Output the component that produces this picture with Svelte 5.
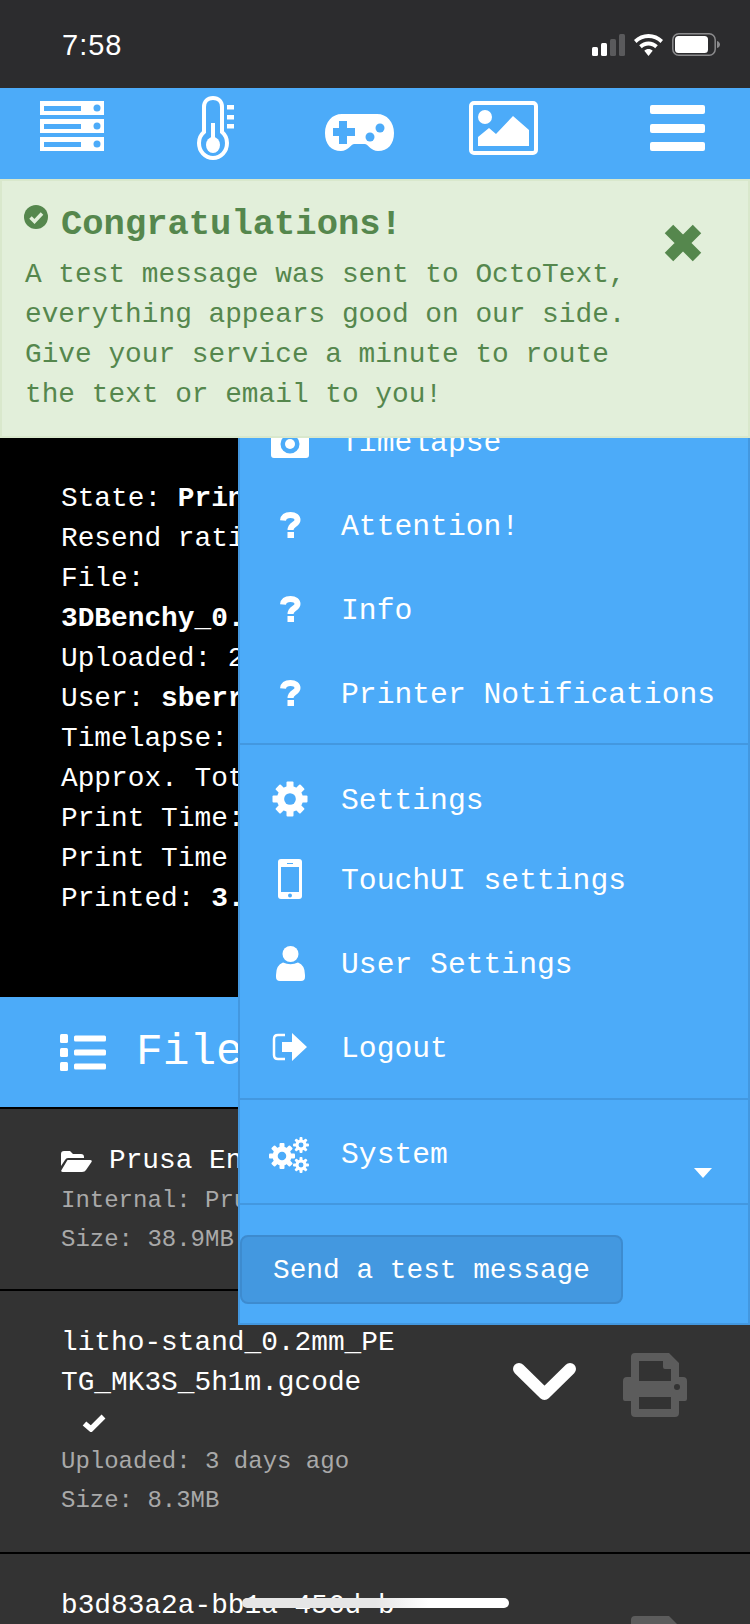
<script>
  const stats = [
    ['State: ', 'Prin'], ['Resend rati', ''], ['File:', ''], ['', '3DBenchy_0.'],
    ['Uploaded: 2', ''], ['User: ', 'sberr'], ['Timelapse:', ''],
    ['Approx. Tot', ''], ['Print Time:', ''], ['Print Time', ''], ['Printed: ', '3.']
  ];
  const teeth = [0, 45, 90, 135];
</script>

{#snippet gear(cx, cy, r, tw, tl)}
  {#each teeth as a}
    <rect x={cx - tw / 2} y={cy - tl} width={tw} height={tl * 2} rx="1" transform="rotate({a} {cx} {cy})" fill="#fff" />
  {/each}
  <circle {cx} {cy} r={r} fill="#fff" />
  <circle {cx} {cy} r={r * 0.45} fill="#4cabf9" />
{/snippet}

{#snippet question()}
  <svg width="21" height="26" viewBox="0 0 21 26">
    <path d="M3 8.500C3.500 4.500 6.500 3 10.500 3C15 3 17.500 5 17.500 8C17.500 12.500 10.500 12 10.500 18" fill="none" stroke="#fff" stroke-width="6" />
    <rect x="7.500" y="20" width="6.500" height="6" fill="#fff" />
  </svg>
{/snippet}

{#snippet printer()}
  <svg class="printer" width="64" height="64" viewBox="0 0 64 64">
    <path fill="#5c5c5c" fill-rule="evenodd" d="M12 0H46L56 10V24H60Q64 24 64 28V46Q64 48 62 48H56V60Q56 64 52 64H12Q8 64 8 60V48H2Q0 48 0 46V28Q0 24 4 24H8V4Q8 0 12 0ZM16 8V28H48V16H42Q40 16 40 14V8ZM16 44V56H48V44Z" />
    <circle cx="54" cy="34" r="3" fill="#333" />
  </svg>
{/snippet}

<div class="screen">
  <div class="status">
    <span class="time">7:58</span>
    <div class="status-icons">
      <svg width="33" height="22" viewBox="0 0 33 22">
        <rect x="0" y="13" width="6" height="9" rx="1.500" fill="#fff" />
        <rect x="9" y="9" width="6" height="13" rx="1.500" fill="#fff" />
        <rect x="18" y="5" width="6" height="17" rx="1.500" fill="#5a5a5c" />
        <rect x="27" y="0" width="6" height="22" rx="1.500" fill="#5a5a5c" />
      </svg>
      <svg width="29" height="22" viewBox="0 0 29 22">
        <path d="M14.500 0C20 0 25 2.200 29 6L26.500 9C23.300 5.800 19 4 14.500 4S5.700 5.800 2.500 9L0 6C4 2.200 9 0 14.500 0Z" fill="#fff" />
        <path d="M14.500 7.500C18 7.500 21.300 8.900 23.800 11.300L21.200 14.200C19.400 12.500 17 11.500 14.500 11.500S9.600 12.500 7.800 14.200L5.200 11.300C7.700 8.900 11 7.500 14.500 7.500Z" fill="#fff" />
        <path d="M14.500 15C16.100 15 17.600 15.600 18.700 16.700L14.500 22L10.300 16.700C11.400 15.600 12.900 15 14.500 15Z" fill="#fff" />
      </svg>
      <svg width="48" height="23" viewBox="0 0 48 23">
        <rect x="0.800" y="0.800" width="42.400" height="21.400" rx="6" fill="none" stroke="#8b8b8d" stroke-width="1.500" />
        <rect x="3" y="3" width="33" height="17" rx="3.500" fill="#fff" />
        <path d="M45 8C47 8.500 48 10 48 11.500S47 14.500 45 15Z" fill="#8b8b8d" />
      </svg>
    </div>
  </div>

  <nav class="nav">
    <svg class="server" width="64" height="50" viewBox="0 0 64 50">
      <rect x="0" y="0" width="64" height="14" fill="#fff" />
      <rect x="4" y="5" width="37" height="5" fill="#4cabf9" />
      <ellipse cx="57" cy="7" rx="3.500" ry="3.500" fill="#4cabf9" />
      <rect x="0" y="18" width="64" height="14" fill="#fff" />
      <rect x="4" y="23" width="37" height="5" fill="#4cabf9" />
      <ellipse cx="57" cy="25" rx="3.500" ry="3.500" fill="#4cabf9" />
      <rect x="0" y="36" width="64" height="14" fill="#fff" />
      <rect x="4" y="41" width="37" height="5" fill="#4cabf9" />
      <ellipse cx="57" cy="43" rx="3.500" ry="3.500" fill="#4cabf9" />
    </svg>
    <svg class="thermo" width="38" height="64" viewBox="0 0 38 64">
      <path d="M7 36V11C7 5.500 10.500 2 16 2S25 5.500 25 11V36C28.500 39 30 42.500 30 47C30 55.500 24 62 16 62S2 55.500 2 47C2 42.500 3.500 39 7 36Z" fill="none" stroke="#fff" stroke-width="4" />
      <rect x="14" y="27" width="4" height="20" fill="#fff" />
      <ellipse cx="16" cy="49" rx="7" ry="8" fill="#fff" />
      <rect x="30" y="9" width="7" height="4.500" fill="#fff" />
      <rect x="30" y="19" width="7" height="4.500" fill="#fff" />
      <rect x="30" y="28" width="7" height="4.500" fill="#fff" />
    </svg>
    <svg class="pad" width="69" height="37" viewBox="0 0 69 37">
      <path d="M17 0H52C62 0 69 8 69 19C69 30 63 37 53 37C46 37 44 31 40 30H29C25 31 23 37 16 37C6 37 0 30 0 19C0 8 7 0 17 0Z" fill="#fff" />
      <path d="M14 7H22V14H30V22H22V30H14V22H8V14H14Z" fill="#4cabf9" />
      <circle cx="55" cy="14" r="4.500" fill="#4cabf9" />
      <circle cx="45" cy="23" r="4.500" fill="#4cabf9" />
    </svg>
    <svg class="pic" width="69" height="54" viewBox="0 0 69 54">
      <rect x="2" y="2" width="65" height="50" rx="3" fill="none" stroke="#fff" stroke-width="4" />
      <ellipse cx="16" cy="16" rx="7" ry="7" fill="#fff" />
      <path d="M9 45V36L20 27L27 33L44 15L60 29V45Z" fill="#fff" />
    </svg>
    <div class="bars"><i></i><i></i><i></i></div>
  </nav>

  <div class="alert">
    <svg class="alert-check" width="24" height="24" viewBox="0 0 24 24">
      <circle cx="12" cy="12" r="12" fill="#55874d" />
      <path d="M6.500 12.500L10.500 16.500L18 8.500" fill="none" stroke="#e2efda" stroke-width="3.500" />
    </svg>
    <h4 class="alert-title">Congratulations!</h4>
    <p class="alert-body">A test message was sent to OctoText, everything appears good on our side. Give your service a minute to route the text or email to you!</p>
    <svg class="alert-close" width="38" height="38" viewBox="0 0 38 38">
      <path d="M5 5L33 33M33 5L5 33" stroke="#55874d" stroke-width="12" />
    </svg>
  </div>

  <section class="stats">
    {#each stats as [a, b]}
      <div class="stat">{a}<b>{b}</b></div>
    {/each}
  </section>

  <header class="files-head">
    <svg width="46" height="37" viewBox="0 0 46 37">
      <rect x="0" y="0" width="8" height="9" rx="1.500" fill="#fff" />
      <rect x="0" y="14" width="8" height="9" rx="1.500" fill="#fff" />
      <rect x="0" y="28" width="8" height="9" rx="1.500" fill="#fff" />
      <rect x="14" y="1.500" width="32" height="6" rx="1.500" fill="#fff" />
      <rect x="14" y="15.500" width="32" height="6" rx="1.500" fill="#fff" />
      <rect x="14" y="29.500" width="32" height="6" rx="1.500" fill="#fff" />
    </svg>
    <span>File</span>
  </header>

  <div class="file">
    <div class="name folder">
      <svg width="31" height="21" viewBox="0 0 31 21">
        <path d="M0 15V3Q0 0 3 0H9L12 3H20Q23 3 23 6V7H7Q5 7 4 9Z" fill="#fff" />
        <path d="M6.500 9H29Q31.500 9 30.500 11L25 19Q24 21 21 21H2Q-0.500 21 0.500 19Z" fill="#fff" />
      </svg>
      <span>Prusa En</span>
    </div>
    <div class="meta">Internal: Pru</div>
    <div class="meta">Size: 38.9MB</div>
  </div>

  <div class="file split">
    <div class="file-text">
      <div class="name">litho-stand_0.2mm_PETG_MK3S_5h1m.gcode</div>
      <div class="tick">
        <svg width="24" height="18" viewBox="0 0 24 18">
          <path d="M2.500 9.500L9 15L21.500 2.500" fill="none" stroke="#fff" stroke-width="5.500" />
        </svg>
      </div>
      <div class="meta">Uploaded: 3 days ago</div>
      <div class="meta">Size: 8.3MB</div>
    </div>
    <div class="actions">
      <svg class="chevron" width="63" height="39" viewBox="0 0 63 39">
        <path d="M6 7L31.500 32L57 7" fill="none" stroke="#fff" stroke-width="12" stroke-linecap="round" stroke-linejoin="round" />
      </svg>
      {@render printer()}
    </div>
  </div>

  <div class="file split">
    <div class="file-text">
      <div class="name">b3d83a2a-bb1a-456d-b</div>
    </div>
    <div class="actions">{@render printer()}</div>
  </div>

  <aside class="menu">
    <div class="menu-sec first">
      <div class="item">
        <span class="icon">
          <svg width="38" height="34" viewBox="0 0 38 34">
            <path d="M3 6H11L14 1H24L27 6H35Q38 6 38 9V31Q38 34 35 34H3Q0 34 0 31V9Q0 6 3 6Z" fill="#fff" />
            <circle cx="19" cy="20" r="9.500" fill="#4cabf9" />
            <circle cx="19" cy="20" r="5" fill="#fff" />
          </svg>
        </span><span class="label">Timelapse</span>
      </div>
      <div class="item"><span class="icon">{@render question()}</span><span class="label">Attention!</span></div>
      <div class="item"><span class="icon">{@render question()}</span><span class="label">Info</span></div>
      <div class="item"><span class="icon">{@render question()}</span><span class="label">Printer Notifications</span></div>
    </div>
    <div class="menu-sec second">
      <div class="item short">
        <span class="icon">
          <svg width="36" height="36" viewBox="0 0 36 36">{@render gear(18, 18, 13, 7, 17.500)}</svg>
        </span><span class="label">Settings</span>
      </div>
      <div class="item">
        <span class="icon">
          <svg width="24" height="40" viewBox="0 0 24 40">
            <rect x="0" y="0" width="24" height="40" rx="3" fill="#fff" />
            <rect x="3" y="8" width="18" height="25" fill="#4cabf9" />
            <rect x="9" y="4" width="6" height="1" fill="#4cabf9" />
            <circle cx="12" cy="36.500" r="2" fill="#4cabf9" />
          </svg>
        </span><span class="label">TouchUI settings</span>
      </div>
      <div class="item">
        <span class="icon">
          <svg width="29" height="35" viewBox="0 0 29 35">
            <circle cx="14.500" cy="8" r="8" fill="#fff" />
            <path d="M7 16.500Q14.500 20 22 16.500Q29 19 29 29V31Q29 35 25 35H4Q0 35 0 31V29Q0 19 7 16.500Z" fill="#fff" />
          </svg>
        </span><span class="label">User Settings</span>
      </div>
      <div class="item">
        <span class="icon">
          <svg width="36" height="28" viewBox="0 0 36 28">
            <path d="M13 2H6Q2 2 2 6V22Q2 26 6 26H13" fill="none" stroke="#fff" stroke-width="2.500" />
            <path d="M10 9H20V0L35 14L20 28V19H10Z" fill="#fff" />
          </svg>
        </span><span class="label">Logout</span>
      </div>
    </div>
    <div class="menu-sec third">
      <div class="item system">
        <span class="icon">
          <svg width="42" height="36" viewBox="0 0 42 36">
            {@render gear(13, 19, 9.500, 5, 13)}
            {@render gear(32, 8, 5.500, 3, 8)}
            {@render gear(32, 28, 5.500, 3, 8)}
          </svg>
        </span><span class="label">System</span>
        <svg class="caret" width="18" height="10" viewBox="0 0 18 10"><path d="M0 0H18L9 10Z" fill="#fff" /></svg>
      </div>
    </div>
    <div class="menu-foot">
      <button class="test">Send a test message</button>
    </div>
  </aside>

  <div class="home"></div>
</div>

<style>
  :global(body) { margin: 0; background: #333; }
  .screen {
    position: relative;
    width: 750px;
    height: 1624px;
    overflow: hidden;
    background: #333;
    color: #fff;
    font: 27.8px/40px "Liberation Mono", "DejaVu Sans Mono", monospace;
  }
  .status {
    height: 88px;
    background: #2c2c2e;
    display: flex;
    justify-content: space-between;
    align-items: flex-start;
    padding: 0 30px 0 62px;
    box-sizing: border-box;
  }
  .time { font: 29px/34px "Liberation Sans", sans-serif; letter-spacing: 1px; margin-top: 28px; }
  .status-icons { display: flex; align-items: center; gap: 9px; margin-top: 33px; }
  .nav {
    height: 91px;
    background: #4cabf9;
    display: flex;
    align-items: flex-start;
    padding-left: 40px;
    box-sizing: border-box;
  }
  .server { margin-top: 13px; }
  .thermo { margin: 8px 0 0 93px; }
  .pad { margin: 26px 0 0 90px; }
  .pic { margin: 13px 0 0 75px; }
  .bars { width: 55px; margin: 17px 0 0 112px; display: flex; flex-direction: column; gap: 9.500px; }
  .bars i { height: 9px; background: #fff; border-radius: 2px; display: block; }
  .alert {
    position: relative;
    z-index: 2;
    height: 259px;
    box-sizing: border-box;
    background: #e2efda;
    border: 2px solid #d9e8cc;
    color: #55874d;
    padding: 22px 120px 0 23px;
  }
  .alert-check { position: absolute; left: 22px; top: 24px; }
  .alert-title {
    margin: 0 0 0 36px;
    font: bold 35.500px/44px "Liberation Mono", monospace;
  }
  .alert-body { margin: 8px 0 0; }
  .alert-close { position: absolute; right: 46px; top: 43px; }
  .stats {
    background: #000;
    height: 559px;
    box-sizing: border-box;
    padding: 41px 0 0 61px;
  }
  .stat { white-space: nowrap; height: 40px; }
  .files-head {
    height: 112px;
    box-sizing: border-box;
    background: #4cabf9;
    border-bottom: 2px solid #000;
    display: flex;
    align-items: center;
    padding-left: 60px;
    gap: 30px;
    font-size: 44.500px;
  }
  .file {
    background: #333;
    padding: 32px 0 0 61px;
    border-bottom: 2px solid #000;
    box-sizing: border-box;
    height: 182px;
  }
  .file.split { display: flex; height: 263px; }
  .file.split:last-of-type { height: auto; }
  .file-text { width: 340px; }
  .name { word-break: break-all; }
  .name.folder { display: flex; align-items: center; gap: 17px; white-space: nowrap; word-break: normal; }
  .tick { height: 39px; padding-left: 21px; }
  .tick svg { display: block; padding-top: 11px; }
  .meta { font-size: 24px; line-height: 39px; color: #a9a9a9; }
  .actions { margin-left: 72px; display: flex; align-items: flex-start; gap: 47px; width: 214px; justify-content: flex-end; }
  .chevron { margin-top: 39px; }
  .printer { margin-top: 30px; flex: none; }
  .menu {
    position: absolute;
    left: 238px;
    top: 399px;
    width: 512px;
    box-sizing: border-box;
    background: #4cabf9;
    border-left: 2px solid #4398e0;
    border-right: 2px solid #4398e0;
    border-bottom: 2px solid #4398e0;
    z-index: 1;
  }
  .menu-sec { border-bottom: 2px solid #4398e0; }
  .menu-sec.first { padding-bottom: 8px; }
  .menu-sec.second { padding: 12px 0 9px; }
  .menu-sec.third { height: 105px; box-sizing: border-box; padding-top: 13px; }
  .item {
    height: 84px;
    display: flex;
    align-items: center;
    white-space: nowrap;
    font-size: 29.700px;
  }
  .item.short { height: 80px; padding-top: 4px; box-sizing: border-box; }
  .label { margin-left: -1px; padding-top: 3px; }
  .icon {
    width: 102px;
    flex: none;
    padding-right: 2px;
    box-sizing: border-box;
    display: flex;
    align-items: center;
    justify-content: center;
  }
  .icon svg { display: block; }
  .system { position: relative; }
  .system .label { padding-top: 0; }
  .caret { position: absolute; left: 454px; top: 55px; }
  .menu-foot { padding: 30px 0 19px; }
  .test {
    display: block;
    margin: 0;
    width: 383px;
    height: 69px;
    box-sizing: border-box;
    background: #4398e0;
    color: #fff;
    border: 2px solid #3d8bcf;
    border-radius: 8px;
    font: inherit;
    text-align: left;
    padding: 2px 0 0 31px;
  }
  .home {
    position: absolute;
    left: 242px;
    top: 1598px;
    width: 267px;
    height: 10px;
    border-radius: 5px;
    background: linear-gradient(90deg, #e6e6e6 0%, #e6e6e6 50%, #fff 70%);
    z-index: 3;
  }
</style>
